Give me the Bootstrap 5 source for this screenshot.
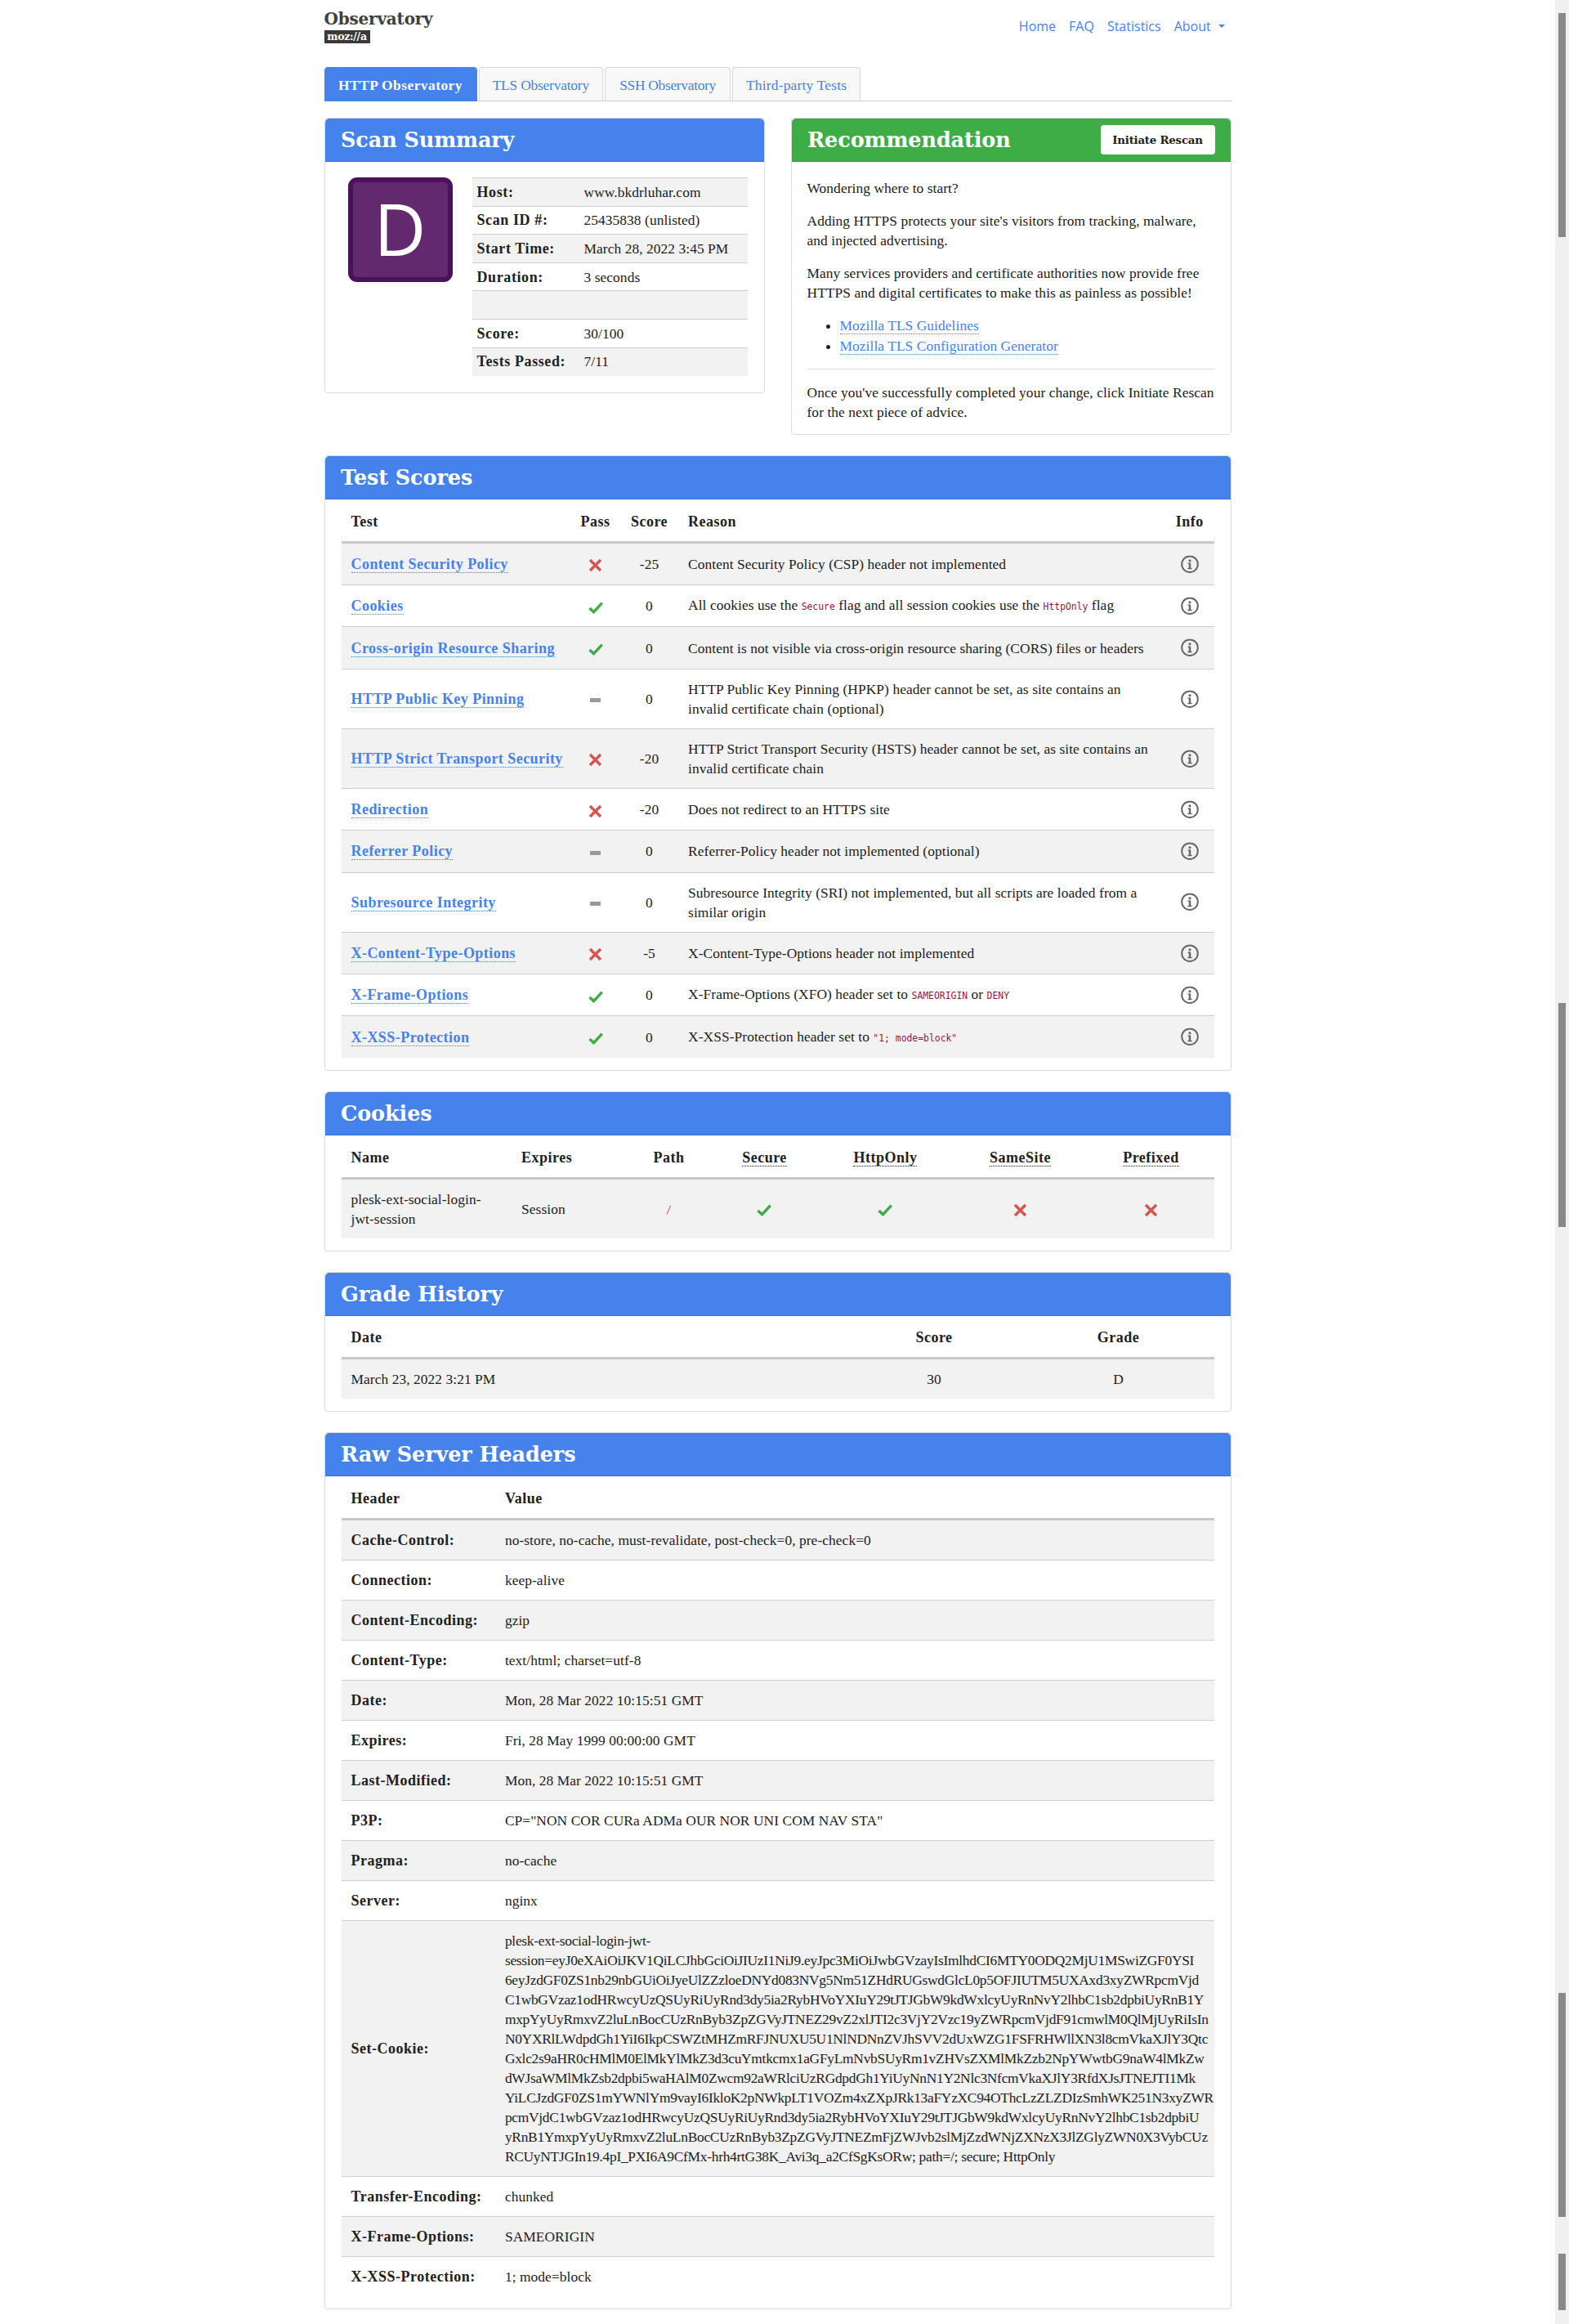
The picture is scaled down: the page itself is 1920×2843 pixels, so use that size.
<!DOCTYPE html>
<html lang="en">
<head>
<meta charset="utf-8">
<title>Observatory</title>
<link rel="stylesheet" href="https://cdn.jsdelivr.net/npm/bootstrap@5.3.0/dist/css/bootstrap.min.css">
<style>
:root{--obs-blue:#4582ec;--obs-green:#3fad46;--obs-line:#cfcfcf;}
html,body{margin:0;}
body{font-family:"Liberation Serif",serif;font-size:17.4px;line-height:24px;color:#212121;letter-spacing:.07px;background:#fff;}
.page-shell{display:flex;min-height:2843px;}
.page-main{flex:1 1 auto;min-width:0;}
.obs-wrap{width:1140px;margin:0 auto;padding:0 15px 17px;--bs-gutter-x:30px;}
.obs-brand{height:82px;padding:0;align-items:flex-start;}
.brand-stack{padding-top:11px;line-height:1;}
.brand-name{font-family:"DejaVu Serif",serif;font-weight:700;font-size:20px;line-height:24px;color:#3f3f3f;letter-spacing:-.2px;display:block;}
.brand-moz{display:block;width:56px;height:16px;margin-top:2px;background:#3a3a3a;color:#fff;font-family:"DejaVu Serif",serif;font-weight:700;font-size:12.5px;line-height:16px;text-align:center;letter-spacing:-.3px;}
.obs-menu{padding-top:20px;font-family:"Open Sans",sans-serif;font-size:16px;letter-spacing:0;}
.obs-menu .nav-link{color:var(--obs-blue);padding:0 8px;line-height:24px;}
.obs-menu .dropdown-toggle::after{margin-left:.55em;}
.obs-tabs{border-bottom:1px solid var(--obs-line);gap:2px;margin-bottom:20px;height:42px;}
.obs-tabs .nav-item{margin:0;}
.obs-tabs .nav-link{height:42px;padding:9px 0;margin:0;text-align:center;background:#f8f8f8;border:1px solid #d9d9d9;border-bottom-color:var(--obs-line);border-radius:4px 4px 0 0;color:var(--obs-blue);letter-spacing:-.1px;}
.obs-tabs .nav-link.active{width:187px;background:var(--obs-blue);border-color:var(--obs-blue);color:#fff;font-weight:700;letter-spacing:.47px;}
.obs-tabs .tab-tls{width:152.6px;letter-spacing:-.2px;}
.obs-tabs .tab-ssh{width:154px;letter-spacing:-.3px;}
.obs-tabs .tab-third{width:157px;letter-spacing:.2px;}
.pair-row{--bs-gutter-x:32px;}
.obs-card{border:1px solid #dcdcdc;border-radius:4px;margin-bottom:25.2px;overflow:hidden;}
.obs-head{display:flex;align-items:center;justify-content:space-between;height:53px;padding:0 19.5px;background:var(--obs-blue);border:0;border-bottom:1px solid #3a74d8;border-radius:0;color:#fff;}
.head-green{background:var(--obs-green);border-bottom-color:#379c3e;padding-right:19px;}
.obs-title{margin:0;font-family:"DejaVu Serif",serif;font-weight:700;font-size:25.5px;line-height:32px;letter-spacing:-.1px;color:#fff;}
.rescan-btn{width:140px;height:36px;padding:0;background:#fff;border:0;border-radius:4px;font-family:"DejaVu Serif",serif;font-weight:700;font-size:13.4px;line-height:36px;letter-spacing:-.25px;color:#212121;}
.rescan-btn:hover{background:#fff;color:#212121;}
.sum-body{display:flex;padding:19px 20px 20px 28px;}
.grade-tile{flex:0 0 128px;width:128px;height:128px;margin-right:24px;background:#63296f;border:6px solid #4a1258;border-radius:11px;color:#fff;font-family:"Open Sans",sans-serif;font-size:88px;line-height:112px;text-align:center;letter-spacing:0;}
.sum-table{width:337px;margin:0;table-layout:fixed;--bs-table-striped-bg:#f2f2f2;--bs-table-color:#212121;--bs-table-striped-color:#212121;}
.sum-table td,.sum-table th{padding:4.8px 5px;border-top:1px solid var(--obs-line);border-bottom:0;}
.sum-table tr{height:34.57px;}
.sum-table .sum-label{width:132px;padding-left:6px;white-space:nowrap;font-size:18px;letter-spacing:.6px;}
.rec-body{padding:20px 19px 15px;}
.rec-body p{margin:0 0 16px;}
.rec-body ul{margin:0 0 16px;padding-left:40px;}
.rec-body li{margin-bottom:1px;}
.rec-body hr{margin:16px 0;border-top:1px solid #dcdcdc;opacity:1;}
.rec-body .last-note{margin:0;white-space:nowrap;}
.dot-link{color:var(--obs-blue);text-decoration:none;border-bottom:1px dotted var(--obs-blue);}
.dot-link:hover{color:var(--obs-blue);}
.table-body{padding:2.5px 20px 15px;}
.obs-table{margin:0;table-layout:fixed;--bs-table-striped-bg:#f2f2f2;--bs-table-border-color:var(--obs-line);--bs-table-color:#212121;--bs-table-striped-color:#212121;}
.obs-table th,.obs-table td{padding:12px;vertical-align:middle;border-bottom:1px solid var(--obs-line);}
.obs-table th{font-size:18px;letter-spacing:.5px;}
.obs-table thead th{border-bottom:3px solid #c8c8c8;white-space:nowrap;}
.obs-table tbody tr:last-child td,.obs-table tbody tr:last-child th{border-bottom:0;}
.obs-table .dot-link{font-weight:700;font-size:18px;letter-spacing:.45px;white-space:nowrap;}
.head-dot{border-bottom:1px dotted #212121;}
.snip{font-family:"DejaVu Sans Mono",monospace;font-size:11.4px;letter-spacing:0;color:#8e1648;}
.snip-path{color:#e2487f;}
.mark-svg{display:inline-block;vertical-align:middle;}
.info-svg{display:block;margin:0 auto;height:26.4px;width:22px;}
.c-test{width:280.7px}.c-pass{width:60.7px}.c-score{width:71.2px}.c-reason{width:596px}.c-info{width:59.4px}
.k-name{width:208.6px}.k-exp{width:141.4px}.k-path{width:102px}.k-sec{width:132px}.k-http{width:164px}.k-same{width:166px}.k-pre{width:154px}
.g-date{width:617px}.g-score{width:217px}.g-grade{width:234px}
.r-name{width:188.4px}
.raw-table .raw-line{white-space:nowrap;letter-spacing:-.27px;}
.fake-bar{flex:0 0 17px;width:17px;background:#f0f0f0;padding:16px 4px 0;}
.bar-thumb{display:block;width:9px;height:274px;background:#888;margin-bottom:937px;}
.bar-near{margin-bottom:45px;}
.bar-tail{display:block;width:9px;height:69px;background:#888;}
</style>
</head>
<body>
<svg width="0" height="0" class="d-none" aria-hidden="true">
  <symbol id="ic-x" viewBox="0 0 17 17"><path d="M2 2 15 15M15 2 2 15" fill="none" stroke="#d9534f" stroke-width="3.4"/></symbol>
  <symbol id="ic-ok" viewBox="0 0 18 15"><path d="M1.5 8 6.5 12.7 16.8 1.6" fill="none" stroke="#3fad46" stroke-width="3.4"/></symbol>
  <symbol id="ic-dash" viewBox="0 0 13 5"><rect width="13" height="5" y="0" fill="#999"/></symbol>
  <symbol id="ic-info" viewBox="0 0 22 22"><circle cx="11" cy="11" r="9.8" fill="none" stroke="#666" stroke-width="2"/><circle cx="11" cy="6.6" r="1.6" fill="#666"/><path d="M8.6 9.4h3.6v6.2h1.4v1.4H8.4v-1.4h1.4v-4.8H8.6z" fill="#666"/></symbol>
</svg>
<div class="page-shell">
<div class="page-main">
<div class="obs-wrap">

<nav class="navbar obs-brand d-flex justify-content-between">
  <a class="text-decoration-none brand-stack" href="#"><span class="brand-name">Observatory</span><span class="brand-moz">moz://a</span></a>
  <ul class="nav obs-menu">
    <li class="nav-item"><a class="nav-link" href="#">Home</a></li>
    <li class="nav-item"><a class="nav-link" href="#">FAQ</a></li>
    <li class="nav-item"><a class="nav-link" href="#">Statistics</a></li>
    <li class="nav-item"><a class="nav-link dropdown-toggle" href="#">About</a></li>
  </ul>
</nav>

<ul class="nav nav-tabs obs-tabs">
  <li class="nav-item"><a class="nav-link active" href="#">HTTP Observatory</a></li>
  <li class="nav-item"><a class="nav-link tab-tls" href="#">TLS Observatory</a></li>
  <li class="nav-item"><a class="nav-link tab-ssh" href="#">SSH Observatory</a></li>
  <li class="nav-item"><a class="nav-link tab-third" href="#">Third-party Tests</a></li>
</ul>

<div class="row pair-row align-items-start">
  <div class="col-6">
    <div class="card obs-card">
      <div class="card-header obs-head"><h2 class="obs-title">Scan Summary</h2></div>
      <div class="card-body sum-body">
        <div class="grade-tile">D</div>
        <table class="table table-striped sum-table">
          <tbody>
            <tr><th class="sum-label">Host:</th><td>www.bkdrluhar.com</td></tr>
            <tr><th class="sum-label">Scan ID #:</th><td>25435838 (unlisted)</td></tr>
            <tr><th class="sum-label">Start Time:</th><td>March 28, 2022 3:45 PM</td></tr>
            <tr><th class="sum-label">Duration:</th><td>3 seconds</td></tr>
            <tr><th class="sum-label"></th><td></td></tr>
            <tr><th class="sum-label">Score:</th><td>30/100</td></tr>
            <tr><th class="sum-label">Tests Passed:</th><td>7/11</td></tr>
          </tbody>
        </table>
      </div>
    </div>
  </div>
  <div class="col-6">
    <div class="card obs-card">
      <div class="card-header obs-head head-green"><h2 class="obs-title">Recommendation</h2><a class="btn rescan-btn" href="#">Initiate Rescan</a></div>
      <div class="card-body rec-body">
        <p>Wondering where to start?</p>
        <p>Adding HTTPS protects your site's visitors from tracking, malware, and injected advertising.</p>
        <p>Many services providers and certificate authorities now provide free HTTPS and digital certificates to make this as painless as possible!</p>
        <ul>
          <li><a class="dot-link" href="#">Mozilla TLS Guidelines</a></li>
          <li><a class="dot-link" href="#">Mozilla TLS Configuration Generator</a></li>
        </ul>
        <hr>
        <p class="last-note">Once you've successfully completed your change, click Initiate Rescan<br>for the next piece of advice.</p>
      </div>
    </div>
  </div>
</div>

<div class="card obs-card">
  <div class="card-header obs-head"><h2 class="obs-title">Test Scores</h2></div>
  <div class="card-body table-body">
    <table class="table table-striped obs-table">
      <colgroup><col class="c-test"><col class="c-pass"><col class="c-score"><col class="c-reason"><col class="c-info"></colgroup>
      <thead><tr><th>Test</th><th class="text-center">Pass</th><th class="text-center">Score</th><th>Reason</th><th class="text-center">Info</th></tr></thead>
      <tbody>
        <tr><td><a class="dot-link" href="#">Content Security Policy</a></td><td class="text-center"><svg class="mark-svg" width="17" height="17"><use href="#ic-x"/></svg></td><td class="text-center">-25</td><td>Content Security Policy (CSP) header not implemented</td><td><svg class="info-svg"><use href="#ic-info" y="2.2" height="22" width="22"/></svg></td></tr>
        <tr><td><a class="dot-link" href="#">Cookies</a></td><td class="text-center"><svg class="mark-svg" width="18" height="15"><use href="#ic-ok"/></svg></td><td class="text-center">0</td><td>All cookies use the <code class="snip">Secure</code> flag and all session cookies use the <code class="snip">HttpOnly</code> flag</td><td><svg class="info-svg"><use href="#ic-info" y="2.2" height="22" width="22"/></svg></td></tr>
        <tr><td><a class="dot-link" href="#">Cross-origin Resource Sharing</a></td><td class="text-center"><svg class="mark-svg" width="18" height="15"><use href="#ic-ok"/></svg></td><td class="text-center">0</td><td>Content is not visible via cross-origin resource sharing (CORS) files or headers</td><td><svg class="info-svg"><use href="#ic-info" y="2.2" height="22" width="22"/></svg></td></tr>
        <tr><td><a class="dot-link" href="#">HTTP Public Key Pinning</a></td><td class="text-center"><svg class="mark-svg" width="13" height="5"><use href="#ic-dash"/></svg></td><td class="text-center">0</td><td>HTTP Public Key Pinning (HPKP) header cannot be set, as site contains an invalid certificate chain (optional)</td><td><svg class="info-svg"><use href="#ic-info" y="2.2" height="22" width="22"/></svg></td></tr>
        <tr><td><a class="dot-link" href="#">HTTP Strict Transport Security</a></td><td class="text-center"><svg class="mark-svg" width="17" height="17"><use href="#ic-x"/></svg></td><td class="text-center">-20</td><td>HTTP Strict Transport Security (HSTS) header cannot be set, as site contains an invalid certificate chain</td><td><svg class="info-svg"><use href="#ic-info" y="2.2" height="22" width="22"/></svg></td></tr>
        <tr><td><a class="dot-link" href="#">Redirection</a></td><td class="text-center"><svg class="mark-svg" width="17" height="17"><use href="#ic-x"/></svg></td><td class="text-center">-20</td><td>Does not redirect to an HTTPS site</td><td><svg class="info-svg"><use href="#ic-info" y="2.2" height="22" width="22"/></svg></td></tr>
        <tr><td><a class="dot-link" href="#">Referrer Policy</a></td><td class="text-center"><svg class="mark-svg" width="13" height="5"><use href="#ic-dash"/></svg></td><td class="text-center">0</td><td>Referrer-Policy header not implemented (optional)</td><td><svg class="info-svg"><use href="#ic-info" y="2.2" height="22" width="22"/></svg></td></tr>
        <tr><td><a class="dot-link" href="#">Subresource Integrity</a></td><td class="text-center"><svg class="mark-svg" width="13" height="5"><use href="#ic-dash"/></svg></td><td class="text-center">0</td><td>Subresource Integrity (SRI) not implemented, but all scripts are loaded from a similar origin</td><td><svg class="info-svg"><use href="#ic-info" y="2.2" height="22" width="22"/></svg></td></tr>
        <tr><td><a class="dot-link" href="#">X-Content-Type-Options</a></td><td class="text-center"><svg class="mark-svg" width="17" height="17"><use href="#ic-x"/></svg></td><td class="text-center">-5</td><td>X-Content-Type-Options header not implemented</td><td><svg class="info-svg"><use href="#ic-info" y="2.2" height="22" width="22"/></svg></td></tr>
        <tr><td><a class="dot-link" href="#">X-Frame-Options</a></td><td class="text-center"><svg class="mark-svg" width="18" height="15"><use href="#ic-ok"/></svg></td><td class="text-center">0</td><td>X-Frame-Options (XFO) header set to <code class="snip">SAMEORIGIN</code> or <code class="snip">DENY</code></td><td><svg class="info-svg"><use href="#ic-info" y="2.2" height="22" width="22"/></svg></td></tr>
        <tr><td><a class="dot-link" href="#">X-XSS-Protection</a></td><td class="text-center"><svg class="mark-svg" width="18" height="15"><use href="#ic-ok"/></svg></td><td class="text-center">0</td><td>X-XSS-Protection header set to <code class="snip">"1; mode=block"</code></td><td><svg class="info-svg"><use href="#ic-info" y="2.2" height="22" width="22"/></svg></td></tr>
      </tbody>
    </table>
  </div>
</div>

<div class="card obs-card">
  <div class="card-header obs-head"><h2 class="obs-title">Cookies</h2></div>
  <div class="card-body table-body">
    <table class="table table-striped obs-table">
      <colgroup><col class="k-name"><col class="k-exp"><col class="k-path"><col class="k-sec"><col class="k-http"><col class="k-same"><col class="k-pre"></colgroup>
      <thead><tr><th>Name</th><th>Expires</th><th class="text-center">Path</th><th class="text-center"><span class="head-dot">Secure</span></th><th class="text-center"><span class="head-dot">HttpOnly</span></th><th class="text-center"><span class="head-dot">SameSite</span></th><th class="text-center"><span class="head-dot">Prefixed</span></th></tr></thead>
      <tbody>
        <tr><td>plesk-ext-social-login-<br>jwt-session</td><td>Session</td><td class="text-center"><code class="snip snip-path">/</code></td><td class="text-center"><svg class="mark-svg" width="18" height="15"><use href="#ic-ok"/></svg></td><td class="text-center"><svg class="mark-svg" width="18" height="15"><use href="#ic-ok"/></svg></td><td class="text-center"><svg class="mark-svg" width="17" height="17"><use href="#ic-x"/></svg></td><td class="text-center"><svg class="mark-svg" width="17" height="17"><use href="#ic-x"/></svg></td></tr>
      </tbody>
    </table>
  </div>
</div>

<div class="card obs-card">
  <div class="card-header obs-head"><h2 class="obs-title">Grade History</h2></div>
  <div class="card-body table-body">
    <table class="table table-striped obs-table">
      <colgroup><col class="g-date"><col class="g-score"><col class="g-grade"></colgroup>
      <thead><tr><th>Date</th><th class="text-center">Score</th><th class="text-center">Grade</th></tr></thead>
      <tbody><tr><td>March 23, 2022 3:21 PM</td><td class="text-center">30</td><td class="text-center">D</td></tr></tbody>
    </table>
  </div>
</div>

<div class="card obs-card mb-0">
  <div class="card-header obs-head"><h2 class="obs-title">Raw Server Headers</h2></div>
  <div class="card-body table-body">
    <table class="table table-striped obs-table raw-table">
      <colgroup><col class="r-name"><col></colgroup>
      <thead><tr><th>Header</th><th>Value</th></tr></thead>
      <tbody>
        <tr><th>Cache-Control:</th><td>no-store, no-cache, must-revalidate, post-check=0, pre-check=0</td></tr>
        <tr><th>Connection:</th><td>keep-alive</td></tr>
        <tr><th>Content-Encoding:</th><td>gzip</td></tr>
        <tr><th>Content-Type:</th><td>text/html; charset=utf-8</td></tr>
        <tr><th>Date:</th><td>Mon, 28 Mar 2022 10:15:51 GMT</td></tr>
        <tr><th>Expires:</th><td>Fri, 28 May 1999 00:00:00 GMT</td></tr>
        <tr><th>Last-Modified:</th><td>Mon, 28 Mar 2022 10:15:51 GMT</td></tr>
        <tr><th>P3P:</th><td>CP="NON COR CURa ADMa OUR NOR UNI COM NAV STA"</td></tr>
        <tr><th>Pragma:</th><td>no-cache</td></tr>
        <tr><th>Server:</th><td>nginx</td></tr>
        <tr><th>Set-Cookie:</th><td class="raw-line">plesk-ext-social-login-jwt-<br>session=eyJ0eXAiOiJKV1QiLCJhbGciOiJIUzI1NiJ9.eyJpc3MiOiJwbGVzayIsImlhdCI6MTY0ODQ2MjU1MSwiZGF0YSI<br>6eyJzdGF0ZS1nb29nbGUiOiJyeUlZZzloeDNYd083NVg5Nm51ZHdRUGswdGlcL0p5OFJIUTM5UXAxd3xyZWRpcmVjd<br>C1wbGVzaz1odHRwcyUzQSUyRiUyRnd3dy5ia2RybHVoYXIuY29tJTJGbW9kdWxlcyUyRnNvY2lhbC1sb2dpbiUyRnB1Y<br>mxpYyUyRmxvZ2luLnBocCUzRnByb3ZpZGVyJTNEZ29vZ2xlJTI2c3VjY2Vzc19yZWRpcmVjdF91cmwlM0QlMjUyRiIsIn<br>N0YXRlLWdpdGh1YiI6IkpCSWZtMHZmRFJNUXU5U1NlNDNnZVJhSVV2dUxWZG1FSFRHWllXN3l8cmVkaXJlY3Qtc<br>Gxlc2s9aHR0cHMlM0ElMkYlMkZ3d3cuYmtkcmx1aGFyLmNvbSUyRm1vZHVsZXMlMkZzb2NpYWwtbG9naW4lMkZw<br>dWJsaWMlMkZsb2dpbi5waHAlM0Zwcm92aWRlciUzRGdpdGh1YiUyNnN1Y2Nlc3NfcmVkaXJlY3RfdXJsJTNEJTI1Mk<br>YiLCJzdGF0ZS1mYWNlYm9vayI6IkloK2pNWkpLT1VOZm4xZXpJRk13aFYzXC94OThcLzZLZDIzSmhWK251N3xyZWR<br>pcmVjdC1wbGVzaz1odHRwcyUzQSUyRiUyRnd3dy5ia2RybHVoYXIuY29tJTJGbW9kdWxlcyUyRnNvY2lhbC1sb2dpbiU<br>yRnB1YmxpYyUyRmxvZ2luLnBocCUzRnByb3ZpZGVyJTNEZmFjZWJvb2slMjZzdWNjZXNzX3JlZGlyZWN0X3VybCUz<br>RCUyNTJGIn19.4pI_PXI6A9CfMx-hrh4rtG38K_Avi3q_a2CfSgKsORw; path=/; secure; HttpOnly</td></tr>
        <tr><th>Transfer-Encoding:</th><td>chunked</td></tr>
        <tr><th>X-Frame-Options:</th><td>SAMEORIGIN</td></tr>
        <tr><th>X-XSS-Protection:</th><td>1; mode=block</td></tr>
      </tbody>
    </table>
  </div>
</div>

</div>
</div>
<div class="fake-bar" aria-hidden="true">
  <span class="bar-thumb"></span>
  <span class="bar-thumb"></span>
  <span class="bar-thumb bar-near"></span>
  <span class="bar-tail"></span>
</div>
</div>
<script src="https://cdn.jsdelivr.net/npm/bootstrap@5.3.0/dist/js/bootstrap.bundle.min.js"></script>
</body>
</html>
